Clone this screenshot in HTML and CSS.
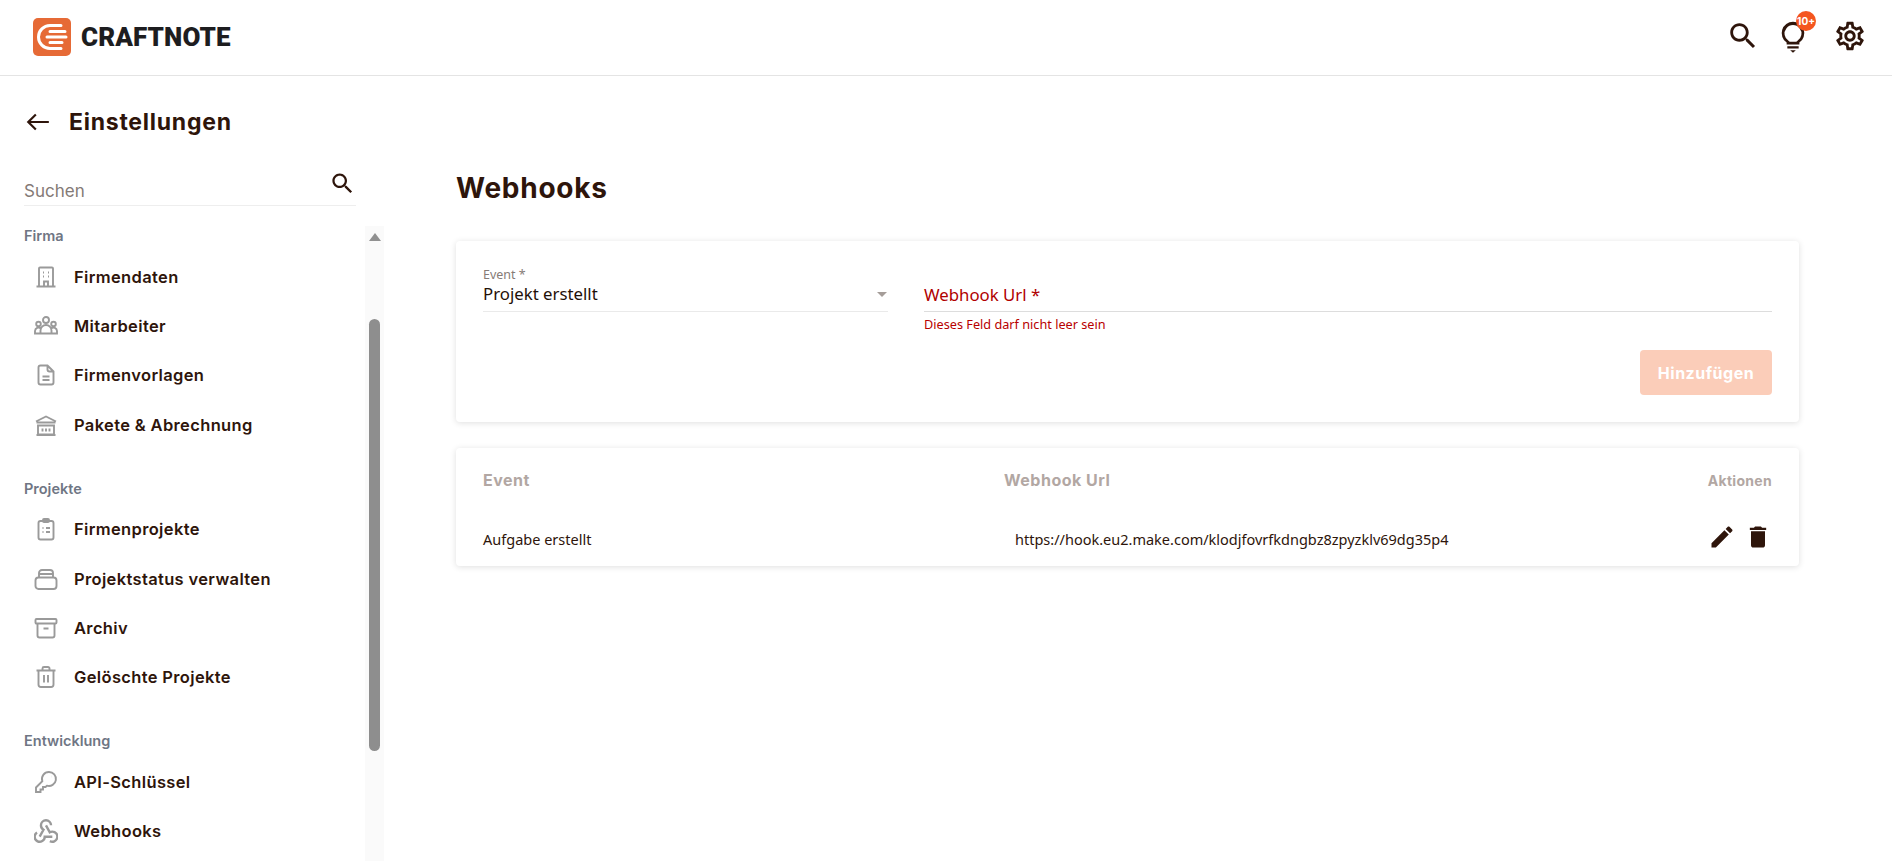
FILE: index.html
```html
<!DOCTYPE html>
<html lang="en">
<head>
    <meta charset="UTF-8">
    <title>Webhooks</title>
    <link rel="stylesheet" href="styles.css">
</head>
<body>

    <!-- Top bar -->
    <header class="topbar">
        <div class="brand">
            <svg class="brand-mark" viewBox="0 0 38 38">
                <rect width="38" height="38" rx="5" fill="#e66a36"/>
                <path d="M28 7.5H17a11.5 11.5 0 0 0 0 23h11" fill="none" stroke="#fff" stroke-width="3" stroke-linecap="round"/>
                <path d="M17 13.500H32M14 19H33M17 24.500H29" fill="none" stroke="#fff" stroke-width="3" stroke-linecap="round"/>
            </svg>
            <span class="brand-name">CRAFTNOTE</span>
        </div>
        <div class="topbar-icons">
            <svg class="top-icon" viewBox="0 0 24 24"><path d="M15.5 14h-.79l-.28-.27C15.41 12.59 16 11.11 16 9.500 16 5.910 13.090 3 9.500 3S3 5.910 3 9.500 5.910 16 9.500 16c1.610 0 3.090-.59 4.230-1.570l.27.28v.79l5 4.990L20.490 19l-4.990-5zm-6 0C7.010 14 5 11.990 5 9.500S7.010 5 9.500 5 14 7.010 14 9.500 11.990 14 9.500 14z"/></svg>
            <div class="bulb">
                <svg class="top-icon" viewBox="0 0 24 24"><path d="M12 2a8 8 0 0 0-4.500 14.600V18h9v-1.400A8 8 0 0 0 12 2zm3 13.500-.5.400V16h-5v-.1L9 15.500A6 6 0 1 1 15 15.500zM8 19.200h8v1.600H8zM10 22h4l-2 1.800z"/></svg>
                <span class="badge">10+</span>
            </div>
            <svg class="top-icon" viewBox="0 0 24 24"><path d="M19.430 12.980c.04-.32.07-.64.07-.98 0-.34-.03-.66-.07-.98l2.110-1.650c.19-.15.24-.42.12-.64l-2-3.460c-.09-.16-.26-.25-.44-.25-.06 0-.12.01-.17.03l-2.490 1c-.52-.4-1.080-.73-1.690-.98l-.38-2.650C14.460 2.180 14.250 2 14 2h-4c-.25 0-.46.18-.49.42l-.38 2.650c-.61.25-1.170.59-1.690.98l-2.490-1c-.06-.02-.12-.03-.18-.03-.17 0-.34.09-.43.25l-2 3.460c-.13.22-.07.49.12.64l2.110 1.650c-.04.32-.07.65-.07.98 0 .33.03.66.07.98l-2.110 1.650c-.19.15-.24.42-.12.64l2 3.460c.09.16.26.25.44.25.06 0 .12-.01.17-.03l2.490-1c.52.4 1.080.73 1.690.98l.38 2.650c.03.24.24.42.49.42h4c.25 0 .46-.18.49-.42l.38-2.650c.61-.25 1.170-.59 1.690-.98l2.490 1c.06.02.12.03.18.03.17 0 .34-.09.43-.25l2-3.460c.12-.22.07-.49-.12-.64l-2.110-1.650zm-1.980-1.710c.04.31.05.52.05.73 0 .21-.02.43-.05.73l-.14 1.130.89.7 1.080.84-.7 1.210-1.270-.51-1.040-.42-.9.68c-.43.32-.84.56-1.250.73l-1.060.43-.16 1.130-.2 1.350h-1.400l-.19-1.350-.16-1.130-1.060-.43c-.43-.18-.83-.41-1.230-.71l-.91-.7-1.060.43-1.270.51-.7-1.210 1.080-.84.89-.7-.14-1.130c-.03-.31-.05-.54-.05-.74s.02-.43.05-.73l.14-1.130-.89-.7-1.080-.84.7-1.210 1.270.51 1.040.42.9-.68c.43-.32.84-.56 1.250-.73l1.060-.43.16-1.130.2-1.350h1.390l.19 1.350.16 1.130 1.060.43c.43.18.83.41 1.230.71l.91.7 1.060-.43 1.270-.51.7 1.210-1.070.85-.89.7.14 1.130zM12 8c-2.210 0-4 1.790-4 4s1.790 4 4 4 4-1.790 4-4-1.790-4-4-4zm0 6c-1.100 0-2-.9-2-2s.9-2 2-2 2 .9 2 2-.9 2-2 2z"/></svg>
        </div>
    </header>

    <div class="page">

        <!-- Settings sidebar -->
        <aside class="sidebar">
            <div class="sidebar-title">
                <svg class="back-icon" viewBox="0 0 24 24"><path d="M22 12H3M10 5l-7 7 7 7" fill="none" stroke="#2e150b" stroke-width="2"/></svg>
                <span>Einstellungen</span>
            </div>
            <div class="sidebar-search">
                <span>Suchen</span>
                <svg class="search-icon" viewBox="0 0 24 24"><path d="M15.500 14h-.79l-.28-.27C15.410 12.590 16 11.110 16 9.500 16 5.910 13.090 3 9.500 3S3 5.910 3 9.500 5.910 16 9.500 16c1.610 0 3.090-.59 4.230-1.570l.27.28v.79l5 4.990L20.490 19l-4.990-5zm-6 0C7.010 14 5 11.990 5 9.500S7.010 5 9.500 5 14 7.010 14 9.500 11.990 14 9.500 14z"/></svg>
            </div>

            <div class="sidebar-body">
                <nav class="nav">
                    <div class="nav-group">
                        <h4>Firma</h4>
                        <a class="nav-item">
                            <svg viewBox="0 0 24 24"><path d="M5 21.500V3.500a1 1 0 0 1 1-1h12a1 1 0 0 1 1 1v18M2.500 21.500h19M10 21.500v-5h4v5M9 7.500h1M14 7.500h1M9 11.500h1M14 11.500h1"/></svg>
                            Firmendaten
                        </a>
                        <a class="nav-item">
                            <svg viewBox="0 0 24 24"><circle cx="12" cy="6" r="3"/><circle cx="4.500" cy="10" r="2.300"/><circle cx="19.500" cy="10" r="2.300"/><path d="M6.500 19.500v-3a5.500 5.500 0 0 1 11 0v3zM6.500 19.500H1v-2.500a3.500 3.500 0 0 1 5.800-2.500M17.500 19.500H23v-2.500a3.500 3.500 0 0 0-5.800-2.500"/></svg>
                            Mitarbeiter
                        </a>
                        <a class="nav-item">
                            <svg viewBox="0 0 24 24"><path d="M6.500 2.500h7l6 6v11a2 2 0 0 1-2 2h-11a2 2 0 0 1-2-2v-15a2 2 0 0 1 2-2zM13.500 2.500v4a2 2 0 0 0 2 2h4M8.500 13.500h7M8.500 17h7"/></svg>
                            Firmenvorlagen
                        </a>
                        <a class="nav-item">
                            <svg viewBox="0 0 24 24"><path d="M2 8.500 12 3.500l10 5M2.500 9.500h19M4 12.500h16v9H4zM2.500 22h19M8.500 15.500v3M12 15.500v3M15.500 15.500v3"/></svg>
                            Pakete &amp; Abrechnung
                        </a>
                    </div>
                    <div class="nav-group">
                        <h4>Projekte</h4>
                        <a class="nav-item">
                            <svg viewBox="0 0 24 24"><rect x="4.500" y="4" width="15" height="18.500" rx="2"/><path d="M9 4V3a1 1 0 0 1 1-1h4a1 1 0 0 1 1 1v1a1 1 0 0 1-1 1h-4a1 1 0 0 1-1-1zM8.500 11h1M12 11h4M8.500 15h1M12 15h4"/></svg>
                            Firmenprojekte
                        </a>
                        <a class="nav-item">
                            <svg viewBox="0 0 24 24"><rect x="1.500" y="10.500" width="21" height="11.500" rx="3"/><path d="M5 10.500V6a3 3 0 0 1 3-3h8a3 3 0 0 1 3 3v4.500M5 7h14"/></svg>
                            Projektstatus verwalten
                        </a>
                        <a class="nav-item">
                            <svg viewBox="0 0 24 24"><rect x="1.500" y="3" width="21" height="4.500" rx="1"/><path d="M3.500 7.500v12a2 2 0 0 0 2 2h13a2 2 0 0 0 2-2v-12M9.500 12.500h5"/></svg>
                            Archiv
                        </a>
                        <a class="nav-item">
                            <svg viewBox="0 0 24 24"><path d="M2.500 5.500h19M4.500 5.500v14a2.500 2.500 0 0 0 2.500 2.500h10a2.500 2.500 0 0 0 2.500-2.500v-14M8.500 5.500v-2a1.500 1.500 0 0 1 1.500-1.500h4a1.500 1.500 0 0 1 1.500 1.500v2M10 10v7.500M14 10v7.500"/></svg>
                            Gelöschte Projekte
                        </a>
                    </div>
                    <div class="nav-group">
                        <h4>Entwicklung</h4>
                        <a class="nav-item">
                            <svg viewBox="0 0 24 24"><path d="M15 2a7 7 0 0 0-6.700 9.200L2 17.500V22h4.500v-2.500H9V17h2.500l1.400-1.300A7 7 0 1 0 15 2zM17 6.500h.1"/></svg>
                            API-Schlüssel
                        </a>
                        <a class="nav-item">
                            <svg viewBox="2.500 3 19 19"><path d="M4.876 13.610a4 4 0 1 0 6.124 3.390h6M15.066 20.502a4 4 0 1 0 1.934-7.502c-.706 0-1.424.179-2 .5l-3-5.500M16 8a4 4 0 1 0-8 0c0 1.506.77 2.818 2 3.500l-3 5.500"/></svg>
                            Webhooks
                        </a>
                    </div>
                </nav>
                <div class="scroll-track">
                    <span class="scroll-arrow"></span>
                    <span class="scroll-thumb"></span>
                </div>
            </div>
        </aside>

        <!-- Main content -->
        <main class="content">
            <h1>Webhooks</h1>

            <section class="card form-card">
                <div class="form-row">
                    <div class="field">
                        <label class="field-label">Event *</label>
                        <div class="field-value select">
                            <span>Projekt erstellt</span>
                            <span class="caret"></span>
                        </div>
                    </div>
                    <div class="field field-error">
                        <span class="field-label">&nbsp;</span>
                        <div class="field-value">Webhook Url *</div>
                        <p class="error-text">Dieses Feld darf nicht leer sein</p>
                    </div>
                </div>
                <div class="form-actions">
                    <button class="add-button" disabled>Hinzufügen</button>
                </div>
            </section>

            <section class="card table-card">
                <div class="table-row table-head">
                    <span>Event</span>
                    <span>Webhook Url</span>
                    <span class="col-actions">Aktionen</span>
                </div>
                <div class="table-row table-data">
                    <span>Aufgabe erstellt</span>
                    <span class="hook-url">https://hook.eu2.make.com/klodjfovrfkdngbz8zpyzklv69dg35p4</span>
                    <span class="col-actions">
                        <svg viewBox="0 0 24 24"><path d="M3 17.250V21h3.750L17.810 9.940l-3.750-3.750L3 17.250zM20.710 7.040c.39-.39.39-1.020 0-1.410l-2.340-2.340c-.39-.39-1.020-.39-1.410 0l-1.830 1.830 3.750 3.750 1.830-1.830z"/></svg>
                        <svg viewBox="0 0 24 24"><path d="M6 19c0 1.100.9 2 2 2h8c1.100 0 2-.9 2-2V7H6v12zM19 4h-3.500l-1-1h-5l-1 1H5v2h14V4z"/></svg>
                    </span>
                </div>
            </section>
        </main>
    </div>

</body>
</html>
```

FILE: styles.css
```css
html, body {
    height: 100%;
}

body {
    margin: 0;
    height: 861px;
    overflow: hidden;
    background-color: #fff;
    color: #2e150b;
    font-family: "Inter", "Liberation Sans", sans-serif;
}

/* Top bar */
.topbar {
    display: flex;
    justify-content: space-between;
    align-items: center;
    height: 75px;
    padding: 0 25px 0 33px;
    border-bottom: 1px solid #e4e4e4;
}

.brand {
    display: flex;
    align-items: center;
    gap: 10px;
}

.brand-mark {
    width: 38px;
    height: 38px;
    margin-top: -2px;
}

.brand-name {
    font-family: "Roboto", sans-serif;
    font-weight: 900;
    font-size: 26px;
    color: #1d1d1f;
    letter-spacing: 0.1px;
    margin-top: -2px;
}

.topbar-icons {
    display: flex;
    align-items: center;
    gap: 16px;
    margin-top: -4px;
}

.top-icon {
    display: block;
    width: 34px;
    height: 34px;
    fill: #2e150b;
}

.bulb {
    position: relative;
    margin-right: 7px;
}

.badge {
    position: absolute;
    top: -8px;
    right: -6px;
    width: 20px;
    height: 20px;
    line-height: 20px;
    border-radius: 50%;
    background-color: #f4561f;
    color: #fff;
    font-size: 10px;
    font-weight: 700;
    text-align: center;
}

/* Layout */
.page {
    display: flex;
    height: 785px;
}

/* Sidebar */
.sidebar {
    width: 384px;
    flex-shrink: 0;
    display: flex;
    flex-direction: column;
    overflow: hidden;
}

.sidebar-title {
    display: flex;
    align-items: center;
    gap: 18px;
    padding: 32px 0 0 25px;
    height: 27px;
    font-size: 23px;
    font-weight: 700;
    letter-spacing: 0.75px;
}

.back-icon {
    width: 26px;
    height: 26px;
}

.sidebar-search {
    display: flex;
    justify-content: space-between;
    align-items: flex-start;
    width: 332px;
    height: 35px;
    margin: 35px 0 0 24px;
    border-bottom: 1px solid #eeeeee;
    font-size: 17px;
    color: #847a76;
}

.sidebar-search span {
    margin-top: 11px;
}

.search-icon {
    width: 27px;
    height: 27px;
    fill: #2e150b;
}

.sidebar-body {
    display: flex;
    flex: 1;
    min-height: 0;
    margin-top: 12px;
}

.nav {
    flex: 1;
    padding-left: 24px;
}

.nav-group {
    margin-bottom: 30.500px;
}

.nav-group h4 {
    margin: 9px 0 0 0;
    height: 18px;
    font-size: 14.500px;
    line-height: 18px;
    font-weight: 600;
    color: #6f7684;
}

.nav-item {
    display: flex;
    align-items: center;
    gap: 16px;
    height: 49.300px;
    padding-left: 10px;
    font-size: 16.500px;
    font-weight: 600;
    letter-spacing: 0.35px;
}

.nav-group h4 + .nav-item {
    margin-top: 7px;
}

.nav-item svg {
    width: 24px;
    height: 24px;
    fill: none;
    stroke: #9a9a9a;
    stroke-width: 1.900;
}

.scroll-track {
    width: 19px;
    margin-top: 8px;
    background-color: #fafafa;
    display: flex;
    flex-direction: column;
    align-items: center;
}

.scroll-arrow {
    width: 0;
    height: 0;
    margin-top: 7px;
    border-left: 6.500px solid transparent;
    border-right: 6.500px solid transparent;
    border-bottom: 8px solid #909090;
}

.scroll-thumb {
    width: 11px;
    height: 432px;
    margin-top: 78px;
    border-radius: 6px;
    background-color: #8e8e8e;
}

/* Main content */
.content {
    width: 1343px;
    padding: 0 0 0 72px;
}

.content h1 {
    margin: 96px 0 37px 0;
    height: 32px;
    line-height: 32px;
    font-size: 28px;
    font-weight: 700;
    letter-spacing: 0.75px;
}

.card {
    background-color: #fff;
    border-radius: 4px;
    box-shadow: 0 1px 6px rgba(0, 0, 0, 0.13);
}

.form-card {
    height: 181px;
    padding: 26px 27px 0 27px;
    box-sizing: border-box;
}

.form-row {
    display: flex;
    gap: 36px;
}

.field {
    flex: 1;
    font-family: "Noto Sans", "Open Sans", sans-serif;
}

.field:first-child {
    flex: 0 0 405px;
}

.field-label {
    display: block;
    height: 16px;
    font-size: 12.500px;
    line-height: 16px;
    color: #867b76;
}

.field-value {
    height: 28px;
    border-bottom: 1px solid #eaeaea;
    font-size: 16.800px;
    line-height: 22px;
    color: #1f1008;
}

.select {
    display: flex;
    justify-content: space-between;
    align-items: flex-start;
}

.caret {
    width: 0;
    height: 0;
    margin: 9px 1px 0 0;
    border-left: 5px solid transparent;
    border-right: 5px solid transparent;
    border-top: 5px solid #a59d99;
}

.field-error .field-value {
    padding-top: 1px;
    height: 27px;
    color: #b00000;
    border-bottom-color: #dddddd;
}

.error-text {
    margin: 4px 0 0 0;
    font-size: 12.700px;
    line-height: 16px;
    color: #b80000;
}

.form-actions {
    display: flex;
    justify-content: flex-end;
    margin-top: 18px;
}

.add-button {
    width: 132px;
    height: 45px;
    border: none;
    border-radius: 4px;
    background-color: #fbcdb9;
    color: #fff;
    font-family: inherit;
    font-size: 16px;
    font-weight: 700;
    letter-spacing: 0.5px;
}

.table-card {
    margin-top: 26px;
    height: 118px;
    padding: 0 27px;
    box-sizing: border-box;
}

.table-row {
    display: grid;
    grid-template-columns: 521px 1fr auto;
    align-items: center;
}

.table-head {
    height: 64px;
    font-size: 16px;
    font-weight: 700;
    letter-spacing: 0.5px;
    color: #b2a7a3;
}

.table-head .col-actions {
    font-size: 14px;
    letter-spacing: 0.3px;
}

.table-data {
    height: 54px;
    font-family: "Noto Sans", "Open Sans", sans-serif;
    font-size: 14.500px;
    color: #2e150b;
}

.table-data .col-actions {
    margin-top: -5px;
}

.hook-url {
    padding-left: 11px;
}

.col-actions {
    display: flex;
    align-items: center;
    gap: 8px;
}

.col-actions svg {
    width: 28px;
    height: 28px;
    fill: #2e150b;
}
```
